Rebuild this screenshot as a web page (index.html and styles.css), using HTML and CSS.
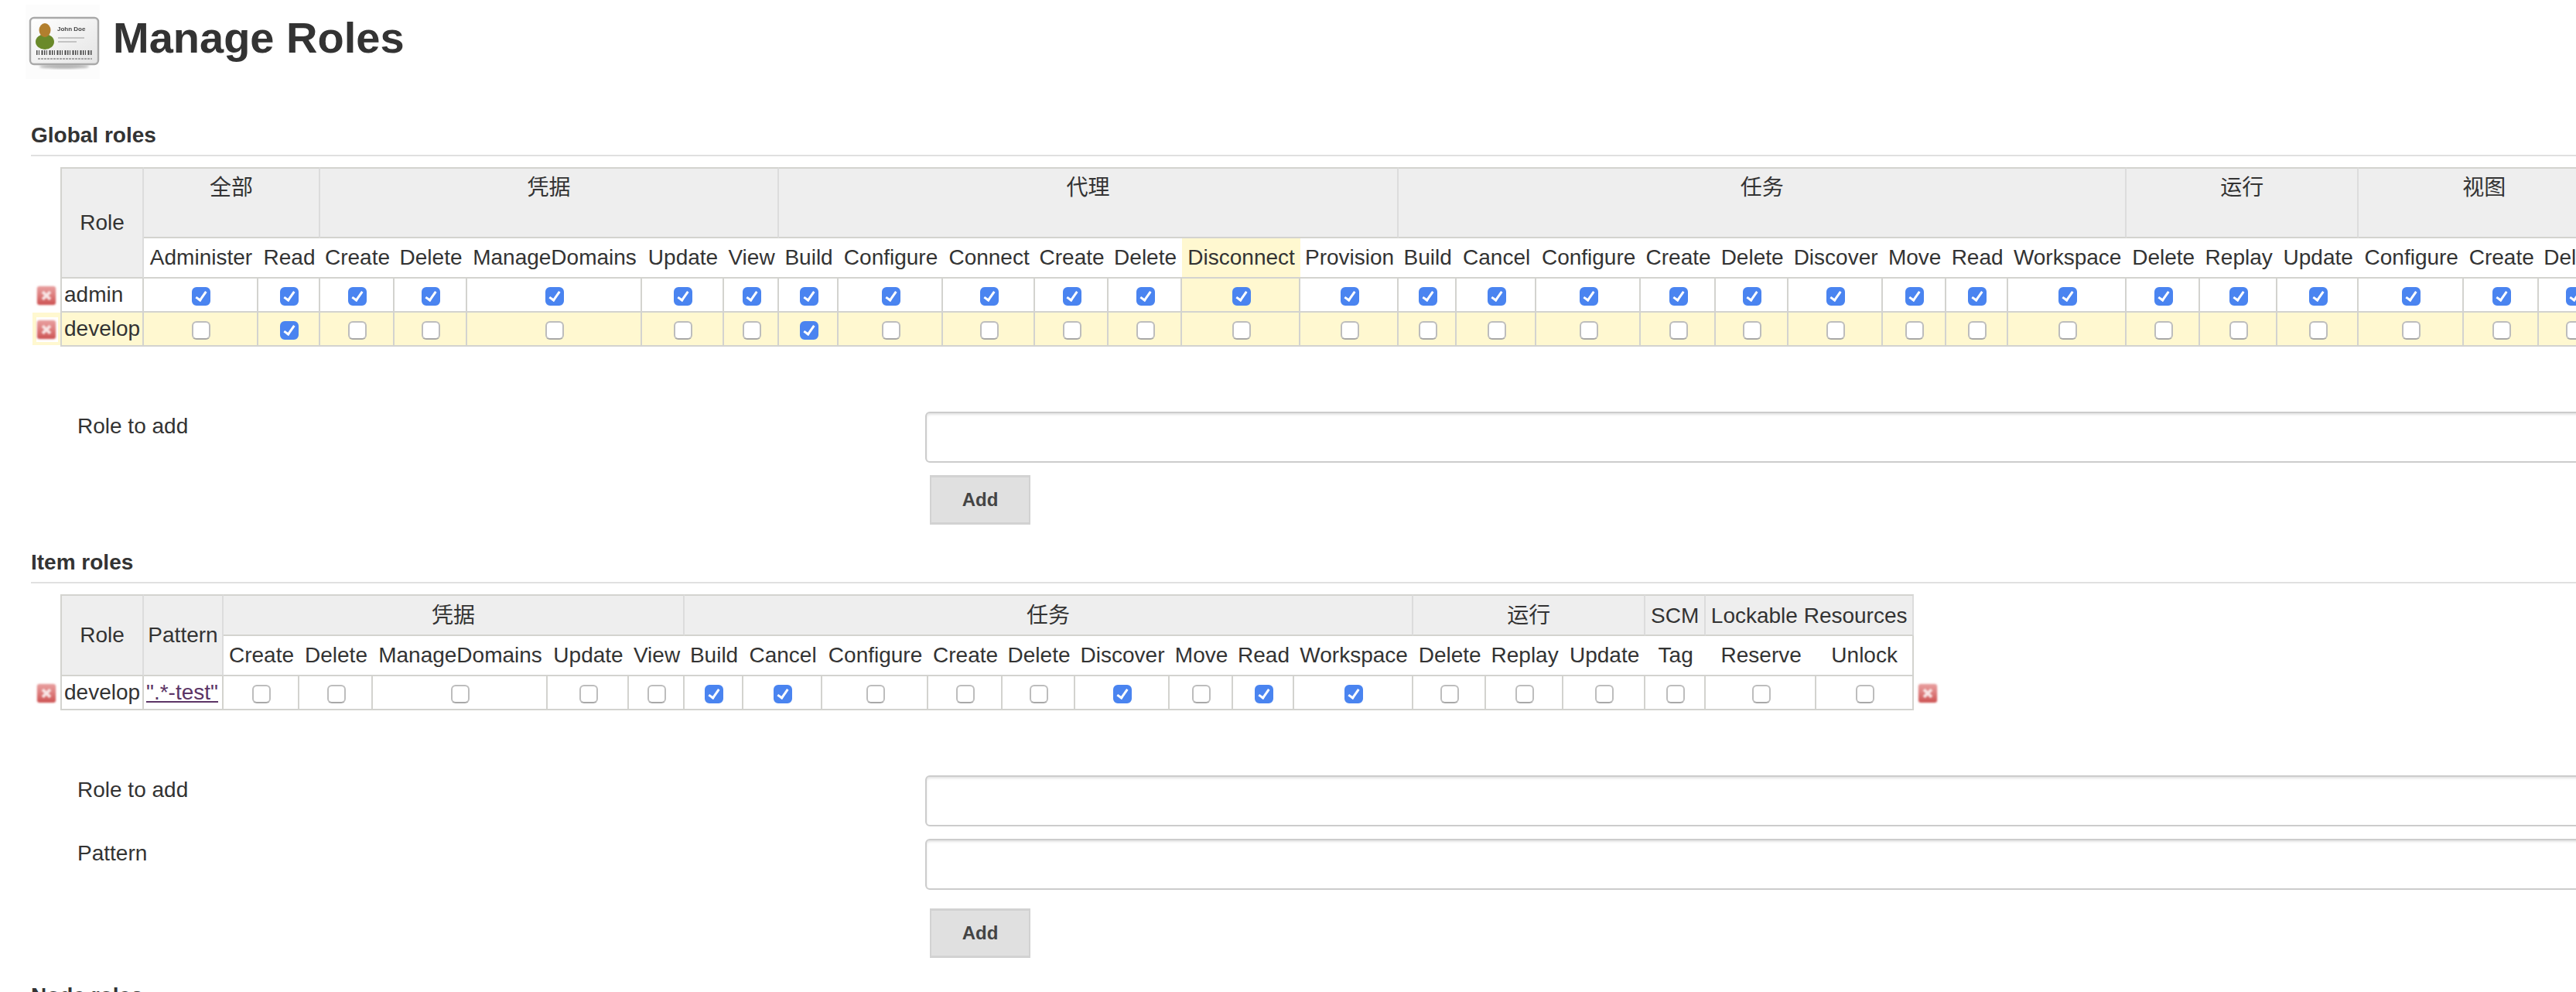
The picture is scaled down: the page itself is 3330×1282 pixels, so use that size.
FILE: index.html
```html
<!DOCTYPE html>
<html lang="en">
<head>
    <meta charset="UTF-8">
    <title>Manage Roles</title>
    <link rel="stylesheet" href="styles.css">
</head>
<body>

    <header class="page-head">
        <svg class="card-icon" width="96" height="96" viewBox="0 0 96 96">
            <defs>
                <linearGradient id="card-fill" x1="0" y1="0" x2="1" y2="1">
                    <stop offset="0" stop-color="#ffffff"/>
                    <stop offset="1" stop-color="#e4e4e4"/>
                </linearGradient>
                <filter id="soft"><feGaussianBlur stdDeviation="0.5"/></filter>
                <filter id="softer"><feGaussianBlur stdDeviation="1.6"/></filter>
            </defs>
            <rect width="96" height="96" fill="#fcfcfc"/>
            <ellipse cx="50" cy="80" rx="32" ry="3" fill="#b5b5b5" filter="url(#softer)"/>
            <rect x="6" y="17" width="88" height="60" rx="5" fill="url(#card-fill)" stroke="#a9a9a9" stroke-width="2.4"/>
            <g filter="url(#soft)">
                <ellipse cx="25" cy="48" rx="12" ry="10" fill="#6b8a2c"/>
                <ellipse cx="25" cy="33" rx="7.5" ry="9" fill="#b27f2e"/>
                <text class="card-name" x="41" y="34">John Doe</text>
                <path d="M42 43H76M42 48H66" stroke="#c4c4c4" stroke-width="2"/>
                <path d="M14 62H87" stroke="#4a4a4a" stroke-width="6" stroke-dasharray="1.5 1.5 1 2.5 2 1.5"/>
                <path d="M16 70H86" stroke="#a5a5a5" stroke-width="2" stroke-dasharray="3 1"/>
            </g>
        </svg>
        <h1>Manage Roles</h1>
    </header>

    <main>

        <section class="roles global-roles">
            <h2>Global roles</h2>
            <table class="grid grid-global">
                <colgroup>
                    <col width="36"><col width="108">
                    <col width="148"><col width="80">
                    <col width="96"><col width="94"><col width="226"><col width="106"><col width="71">
                    <col width="77"><col width="135"><col width="119"><col width="95"><col width="95"><col width="153"><col width="127">
                    <col width="75"><col width="103"><col width="135"><col width="97"><col width="94"><col width="122"><col width="82"><col width="80"><col width="153">
                    <col width="95"><col width="100"><col width="105">
                    <col width="136"><col width="97"><col width="93">
                </colgroup>
                <thead>
                    <tr class="group-row">
                        <th class="blank" rowspan="2"></th>
                        <th class="side" rowspan="2">Role</th>
                        <th colspan="2">全部</th>
                        <th colspan="5">凭据</th>
                        <th colspan="7">代理</th>
                        <th colspan="9">任务</th>
                        <th colspan="3">运行</th>
                        <th colspan="3">视图</th>
                    </tr>
                    <tr class="perm-row">
                        <th>Administer</th><th>Read</th>
                        <th>Create</th><th>Delete</th><th>ManageDomains</th><th>Update</th><th>View</th>
                        <th>Build</th><th>Configure</th><th>Connect</th><th>Create</th><th>Delete</th><th class="hl">Disconnect</th><th>Provision</th>
                        <th>Build</th><th>Cancel</th><th>Configure</th><th>Create</th><th>Delete</th><th>Discover</th><th>Move</th><th>Read</th><th>Workspace</th>
                        <th>Delete</th><th>Replay</th><th>Update</th>
                        <th>Configure</th><th>Create</th><th>Delete</th>
                    </tr>
                </thead>
                <tbody>
                    <tr>
                        <td class="del-cell"><span class="del-wrap"><span class="del-btn"></span></span></td>
                        <td class="name">admin</td>
                        <td><input type="checkbox" checked></td><td><input type="checkbox" checked></td>
                        <td><input type="checkbox" checked></td><td><input type="checkbox" checked></td><td><input type="checkbox" checked></td><td><input type="checkbox" checked></td><td><input type="checkbox" checked></td>
                        <td><input type="checkbox" checked></td><td><input type="checkbox" checked></td><td><input type="checkbox" checked></td><td><input type="checkbox" checked></td><td><input type="checkbox" checked></td><td class="hl"><input type="checkbox" checked></td><td><input type="checkbox" checked></td>
                        <td><input type="checkbox" checked></td><td><input type="checkbox" checked></td><td><input type="checkbox" checked></td><td><input type="checkbox" checked></td><td><input type="checkbox" checked></td><td><input type="checkbox" checked></td><td><input type="checkbox" checked></td><td><input type="checkbox" checked></td><td><input type="checkbox" checked></td>
                        <td><input type="checkbox" checked></td><td><input type="checkbox" checked></td><td><input type="checkbox" checked></td>
                        <td><input type="checkbox" checked></td><td><input type="checkbox" checked></td><td><input type="checkbox" checked></td>
                    </tr>
                    <tr class="hover-row">
                        <td class="del-cell"><span class="del-wrap"><span class="del-btn"></span></span></td>
                        <td class="name">develop</td>
                        <td><input type="checkbox"></td><td><input type="checkbox" checked></td>
                        <td><input type="checkbox"></td><td><input type="checkbox"></td><td><input type="checkbox"></td><td><input type="checkbox"></td><td><input type="checkbox"></td>
                        <td><input type="checkbox" checked></td><td><input type="checkbox"></td><td><input type="checkbox"></td><td><input type="checkbox"></td><td><input type="checkbox"></td><td><input type="checkbox"></td><td><input type="checkbox"></td>
                        <td><input type="checkbox"></td><td><input type="checkbox"></td><td><input type="checkbox"></td><td><input type="checkbox"></td><td><input type="checkbox"></td><td><input type="checkbox"></td><td><input type="checkbox"></td><td><input type="checkbox"></td><td><input type="checkbox"></td>
                        <td><input type="checkbox"></td><td><input type="checkbox"></td><td><input type="checkbox"></td>
                        <td><input type="checkbox"></td><td><input type="checkbox"></td><td><input type="checkbox"></td>
                    </tr>
                </tbody>
            </table>

            <form class="add-form" onsubmit="return false">
                <div class="field">
                    <label for="global_role">Role to add</label>
                    <input type="text" id="global_role">
                </div>
                <button type="submit">Add</button>
            </form>
        </section>

        <section class="roles item-roles">
            <h2>Item roles</h2>
            <table class="grid grid-item">
                <colgroup>
                    <col width="36"><col width="108"><col width="103">
                    <col width="98"><col width="95"><col width="226"><col width="105"><col width="72">
                    <col width="76"><col width="102"><col width="137"><col width="96"><col width="94"><col width="122"><col width="82"><col width="79"><col width="154">
                    <col width="94"><col width="100"><col width="106">
                    <col width="78">
                    <col width="143"><col width="126">
                    <col width="36">
                </colgroup>
                <thead>
                    <tr class="group-row">
                        <th class="blank" rowspan="2"></th>
                        <th class="side" rowspan="2">Role</th>
                        <th class="side" rowspan="2">Pattern</th>
                        <th colspan="5">凭据</th>
                        <th colspan="9">任务</th>
                        <th colspan="3">运行</th>
                        <th>SCM</th>
                        <th colspan="2">Lockable Resources</th>
                        <th class="blank" rowspan="2"></th>
                    </tr>
                    <tr class="perm-row">
                        <th>Create</th><th>Delete</th><th>ManageDomains</th><th>Update</th><th>View</th>
                        <th>Build</th><th>Cancel</th><th>Configure</th><th>Create</th><th>Delete</th><th>Discover</th><th>Move</th><th>Read</th><th>Workspace</th>
                        <th>Delete</th><th>Replay</th><th>Update</th>
                        <th>Tag</th>
                        <th>Reserve</th><th class="last">Unlock</th>
                    </tr>
                </thead>
                <tbody>
                    <tr>
                        <td class="del-cell"><span class="del-wrap"><span class="del-btn"></span></span></td>
                        <td class="name">develop</td>
                        <td class="name"><a href="#">".*-test"</a></td>
                        <td><input type="checkbox"></td><td><input type="checkbox"></td><td><input type="checkbox"></td><td><input type="checkbox"></td><td><input type="checkbox"></td>
                        <td><input type="checkbox" checked></td><td><input type="checkbox" checked></td><td><input type="checkbox"></td><td><input type="checkbox"></td><td><input type="checkbox"></td><td><input type="checkbox" checked></td><td><input type="checkbox"></td><td><input type="checkbox" checked></td><td><input type="checkbox" checked></td>
                        <td><input type="checkbox"></td><td><input type="checkbox"></td><td><input type="checkbox"></td>
                        <td><input type="checkbox"></td>
                        <td><input type="checkbox"></td><td><input type="checkbox"></td>
                        <td class="del-cell"><span class="del-wrap"><span class="del-btn"></span></span></td>
                    </tr>
                </tbody>
            </table>

            <form class="add-form add-form-wide" onsubmit="return false">
                <div class="field">
                    <label for="item_role">Role to add</label>
                    <input type="text" id="item_role">
                </div>
                <div class="field">
                    <label for="item_pattern">Pattern</label>
                    <input type="text" id="item_pattern">
                </div>
                <button type="submit">Add</button>
            </form>
        </section>

        <section class="roles node-roles">
            <h2>Node roles</h2>
        </section>

    </main>

</body>
</html>
```
FILE: styles.css
```css
html, body {
    overflow: hidden;
}

body {
    margin: 0;
    font-family: "Liberation Sans", "Noto Sans CJK SC", sans-serif;
    font-size: 28px;
    line-height: 36px;
    color: #333;
    background-color: white;
}

.page-head {
    display: flex;
    gap: 17px;
    padding: 6px 0 0 33px;
}

.card-icon {
    display: block;
    flex: none;
}

.card-name {
    font-size: 8px;
    font-weight: 700;
    fill: #444;
}

h1 {
    margin: 11px 0 0;
    font-size: 56px;
    line-height: 64px;
}

main {
    padding: 54px 0 0 40px;
}

.roles + .roles {
    margin-top: 30px;
}

h2 {
    margin: 0;
    padding: 1px 0 7px;
    font-size: 28px;
    line-height: 36px;
    border-bottom: 2px solid #e0e0e0;
}

.grid {
    margin: 14px 0 0 2px;
    table-layout: fixed;
    border-collapse: separate;
    border-spacing: 0;
}

.grid-global {
    width: 3333px;
}

.grid-item {
    width: 2468px;
}

.grid th, .grid td {
    box-sizing: border-box;
    padding: 0;
    font-weight: 400;
    text-align: center;
    white-space: nowrap;
}

.group-row th {
    background-color: #eee;
    border-top: 2px solid #d3d3cf;
    border-right: 2px solid #dcdcdc;
    border-bottom: 2px solid #d3d3cf;
}

.grid-global .group-row th {
    height: 92px;
    padding-top: 7px;
    vertical-align: top;
}

.grid-item .group-row th {
    height: 54px;
    padding-top: 1px;
}

.grid .group-row .side {
    padding-top: 0;
    vertical-align: middle;
}

.side:nth-child(2) {
    border-left: 2px solid #d3d3cf;
}

.group-row .blank {
    background: none;
    border: none;
}

.perm-row th {
    height: 52px;
    border-bottom: 2px solid #d3d3cf;
}

.perm-row .last {
    border-right: 2px solid #d3d3cf;
}

.grid .hl, .hover-row td {
    background-color: #fff8d0;
}

.grid td {
    height: 44px;
    padding-left: 2px;
    border-right: 2px solid #d3d3cf;
    border-bottom: 2px solid #d3d3cf;
}

.grid .name {
    padding-left: 3px;
    text-align: left;
}

.name:nth-child(2) {
    border-left: 2px solid #d3d3cf;
}

a {
    color: #5c3566;
}

.grid .del-cell {
    padding: 2px 0 0 5px;
    background-clip: padding-box;
    border-right: none;
    border-bottom-color: transparent;
}

.del-wrap {
    display: block;
    width: 24px;
    padding: 4px 3px 4px 1px;
}

.hover-row .del-wrap {
    background-color: white;
}

.del-btn {
    position: relative;
    display: block;
    height: 24px;
    border-radius: 3px;
    background: linear-gradient(#e8a0a0, #de8080 45%, #cd5454);
    box-shadow: 0 0 2px #f0c0c0;
    filter: blur(0.8px);
}

.del-btn::before, .del-btn::after {
    content: "";
    position: absolute;
    left: 5px;
    top: 10px;
    width: 14px;
    height: 4px;
    background-color: #f8e4e4;
    transform: rotate(45deg);
}

.del-btn::after {
    transform: rotate(-45deg);
}

input[type=checkbox] {
    position: relative;
    display: block;
    box-sizing: border-box;
    width: 24px;
    height: 24px;
    margin: 4px auto 0;
    appearance: none;
    background-color: white;
    border: 2px solid #bdbdbd;
    border-bottom-color: #a8a8a8;
    border-radius: 6px;
}

input[type=checkbox]:checked {
    background-color: #4a84f0;
    border-color: #4a84f0;
}

input[type=checkbox]:checked::after {
    content: "";
    position: absolute;
    left: 6px;
    top: 1px;
    width: 5px;
    height: 12px;
    border: solid white;
    border-width: 0 3px 3px 0;
    transform: rotate(35deg);
}

.add-form {
    display: flex;
    flex-direction: column;
    align-items: flex-start;
    gap: 16px;
    margin: 84px 0 0 60px;
}

.add-form-wide button {
    margin-top: 8px;
}

.field {
    display: flex;
}

label {
    width: 1096px;
    flex: none;
    padding-top: 1px;
}

input[type=text] {
    box-sizing: border-box;
    width: 2400px;
    height: 66px;
    background-color: white;
    border: 2px solid #ccc;
    border-radius: 6px;
    box-shadow: inset 0 2px 3px #e4e4e4;
    outline: none;
}

button {
    box-sizing: border-box;
    width: 130px;
    height: 64px;
    margin-left: 1102px;
    font-family: inherit;
    font-size: 24px;
    font-weight: 700;
    color: #444;
    background-color: #e0e0e0;
    border: 2px solid #d2d2d2;
    border-top-width: 3px;
    border-bottom-width: 3px;
}
```
